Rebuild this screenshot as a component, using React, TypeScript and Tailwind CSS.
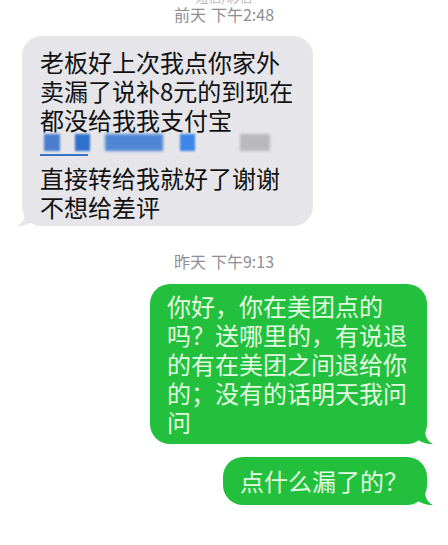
import React from "react";

const cjk = "font-['Noto_Sans_CJK_SC','Noto_Sans',sans-serif]";

const Stamp: React.FC<{ day: string; time: string }> = ({ day, time }) => (
  <div className="flex justify-center gap-[5px] text-[16px] leading-[18px] text-[#8e8e93]">
    <span>{day}</span>
    <span>{time}</span>
  </div>
);

const GrayTail = () => (
  <svg className="absolute left-[-5px] bottom-0" width="22" height="14" viewBox="0 0 22 14">
    <path d="M8 0 C8 6 6 11 0 14 C7 14 13 12 17 8 L22 0 Z" fill="#e5e5ea" />
  </svg>
);

const GreenTail = () => (
  <svg className="absolute right-[-6px] bottom-0" width="22" height="14" viewBox="0 0 22 14">
    <path d="M14 0 C14 6 16 11 22 14 C15 14 9 12 5 8 L0 0 Z" fill="#22c03c" />
  </svg>
);

// blurred account number row
const BlurRow = () => (
  <div className="h-[29px] flex flex-col">
    <div className="flex h-[17px]">
      <div className="ml-[4px] w-[16px] bg-[#4a7fd0] blur-[1px]" />
      <div className="ml-[15px] w-[15px] bg-[#2f70cc] blur-[1px]" />
      <div className="ml-[15px] w-[58px] bg-[#4f86d6] blur-[1.5px]" />
      <div className="ml-[17px] w-[15px] bg-[#3b86e6] blur-[1px]" />
      <div className="ml-[45px] w-[30px] bg-[#b9b9bd] blur-[1.5px]" />
    </div>
    <div className="mt-[3px] w-[48px] h-[2px] bg-[#3b6fc8]" />
  </div>
);

export default function App() {
  return (
    <div className={`w-[448px] h-[545px] bg-white overflow-hidden ${cjk}`}>
      <div className="-mt-[11px] text-center text-[13px] leading-[16px] text-[#b5b5ba]">
        短信/彩信
      </div>
      <Stamp day="前天" time="下午2:48" />

      {/* incoming */}
      <div className="mt-[13px] ml-[22px] w-[291px] relative">
        <div className="relative z-10 bg-[#e5e5ea] rounded-[20px] pl-[18px] pt-[11px] pb-[5px] text-[24px] leading-[29px] text-[#111]">
          <div>老板好上次我点你家外</div>
          <div>卖漏了说补8元的到现在</div>
          <div>都没给我我支付宝</div>
          <BlurRow />
          <div>直接转给我就好了谢谢</div>
          <div>不想给差评</div>
        </div>
        <GrayTail />
      </div>

      <div className="mt-[26px]">
        <Stamp day="昨天" time="下午9:13" />
      </div>

      {/* outgoing */}
      <div className="mt-[14px] flex flex-col items-end pr-[21px] gap-[13px]">
        <div className="relative w-[277px]">
          <div className="relative z-10 bg-[#22c03c] rounded-[20px] pl-[17px] pt-[7px] pb-[8px] text-[24px] leading-[29px] text-[#e2fbe2]">
            <div>你好，你在美团点的</div>
            <div>吗？送哪里的，有说退</div>
            <div>的有在美团之间退给你</div>
            <div>的；没有的话明天我问</div>
            <div>问</div>
          </div>
          <GreenTail />
        </div>
        <div className="relative w-[204px]">
          <div className="relative z-10 bg-[#22c03c] rounded-[20px] pl-[17px] h-[48px] flex items-center text-[24px] text-[#e2fbe2]">
            点什么漏了的？
          </div>
          <GreenTail />
        </div>
      </div>
    </div>
  );
}
